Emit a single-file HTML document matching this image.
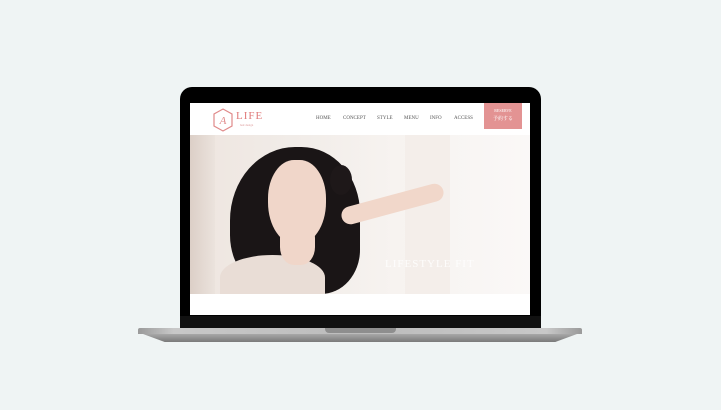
<!DOCTYPE html>
<html><head><meta charset="utf-8"><style>
body{margin:0;width:721px;height:410px;background:#eff4f4;position:relative;overflow:hidden;font-family:"Liberation Serif","Noto Serif CJK SC",serif}
.a{position:absolute}
.n{position:absolute;top:13px;font-size:5px;color:#555;white-space:nowrap}
</style></head><body>
<div class="a" style="left:180px;top:87px;width:361px;height:242px;background:#000;border-radius:12px 12px 0 0"></div>
<div class="a" style="left:180px;top:316px;width:361px;height:13px;background:#111"></div>
<div class="a" style="left:190px;top:103px;width:340px;height:212px;background:#fff;overflow:hidden">
 <svg class="a" style="left:22px;top:5px" width="22" height="24" viewBox="0 0 22 24"><polygon points="11,1 20,6 20,18 11,23 2,18 2,6" fill="none" stroke="#e08a8a" stroke-width="1.2"/><text x="11" y="16" font-size="11" font-style="italic" fill="#e08a8a" text-anchor="middle" font-family="Liberation Serif">A</text></svg>
 <div class="a" style="left:46px;top:7px;font-size:11px;color:#e07a7a;letter-spacing:1px">LIFE</div>
 <div class="a" style="left:50px;top:20px;font-size:3px;color:#d99">hair design</div>
 <div class="n" style="left:126px">HOME</div>
 <div class="n" style="left:153px">CONCEPT</div>
 <div class="n" style="left:187px">STYLE</div>
 <div class="n" style="left:214px">MENU</div>
 <div class="n" style="left:240px">INFO</div>
 <div class="n" style="left:264px">ACCESS</div>
 <div class="a" style="left:294px;top:0;width:38px;height:26px;background:#e39393;color:#fff;text-align:center;font-size:4px;line-height:1"><div style="margin-top:6px">RESERVE</div><div style="font-size:5px;margin-top:4px">予約する</div></div>
 <div class="a" style="left:0;top:32px;width:340px;height:159px;overflow:hidden;background:linear-gradient(90deg,#eee5df 0%,#f1ece8 30%,#f7f3f0 60%,#faf8f7 100%)">
  <div class="a" style="left:0;top:0;width:25px;height:159px;background:linear-gradient(90deg,#dccfc7,#ebe3dd)"></div>
  <div class="a" style="left:215px;top:0;width:45px;height:159px;background:#f4eeea"></div>
  <div class="a" style="left:40px;top:12px;width:130px;height:147px;background:#1a1516;border-radius:50% 45% 30% 40%"></div>
  <div class="a" style="left:30px;top:120px;width:105px;height:45px;background:#e9ddd6;border-radius:50% 50% 0 0"></div>
  <div class="a" style="left:78px;top:25px;width:58px;height:85px;background:#f0d6c9;border-radius:45% 45% 50% 50%"></div>
  <div class="a" style="left:90px;top:85px;width:35px;height:45px;background:#f0d6c9;border-radius:40%"></div>
  <div class="a" style="left:150px;top:60px;width:105px;height:18px;background:#f1d7ca;border-radius:10px;transform:rotate(-15deg)"></div>
  <div class="a" style="left:140px;top:30px;width:22px;height:30px;background:#1e1819;border-radius:50%"></div>
  <div class="a" style="left:195px;top:123px;font-size:11px;color:#fff;letter-spacing:1px;opacity:.85">LIFESTYLE FIT</div>
 </div>
</div>
<div class="a" style="left:138px;top:328px;width:444px;height:6px;background:linear-gradient(90deg,#9a9a9a,#c8c8c8 8%,#bcbcbc 50%,#c8c8c8 92%,#9a9a9a);border-radius:2px 2px 0 0"></div>
<div class="a" style="left:143px;top:334px;width:434px;height:8px;background:linear-gradient(#a8a8a8,#7a7a7a);clip-path:polygon(0 0,100% 0,95% 100%,5% 100%)"></div>
<div class="a" style="left:325px;top:328px;width:71px;height:5px;background:#8e8e8e;border-radius:0 0 4px 4px"></div>
</body></html>
